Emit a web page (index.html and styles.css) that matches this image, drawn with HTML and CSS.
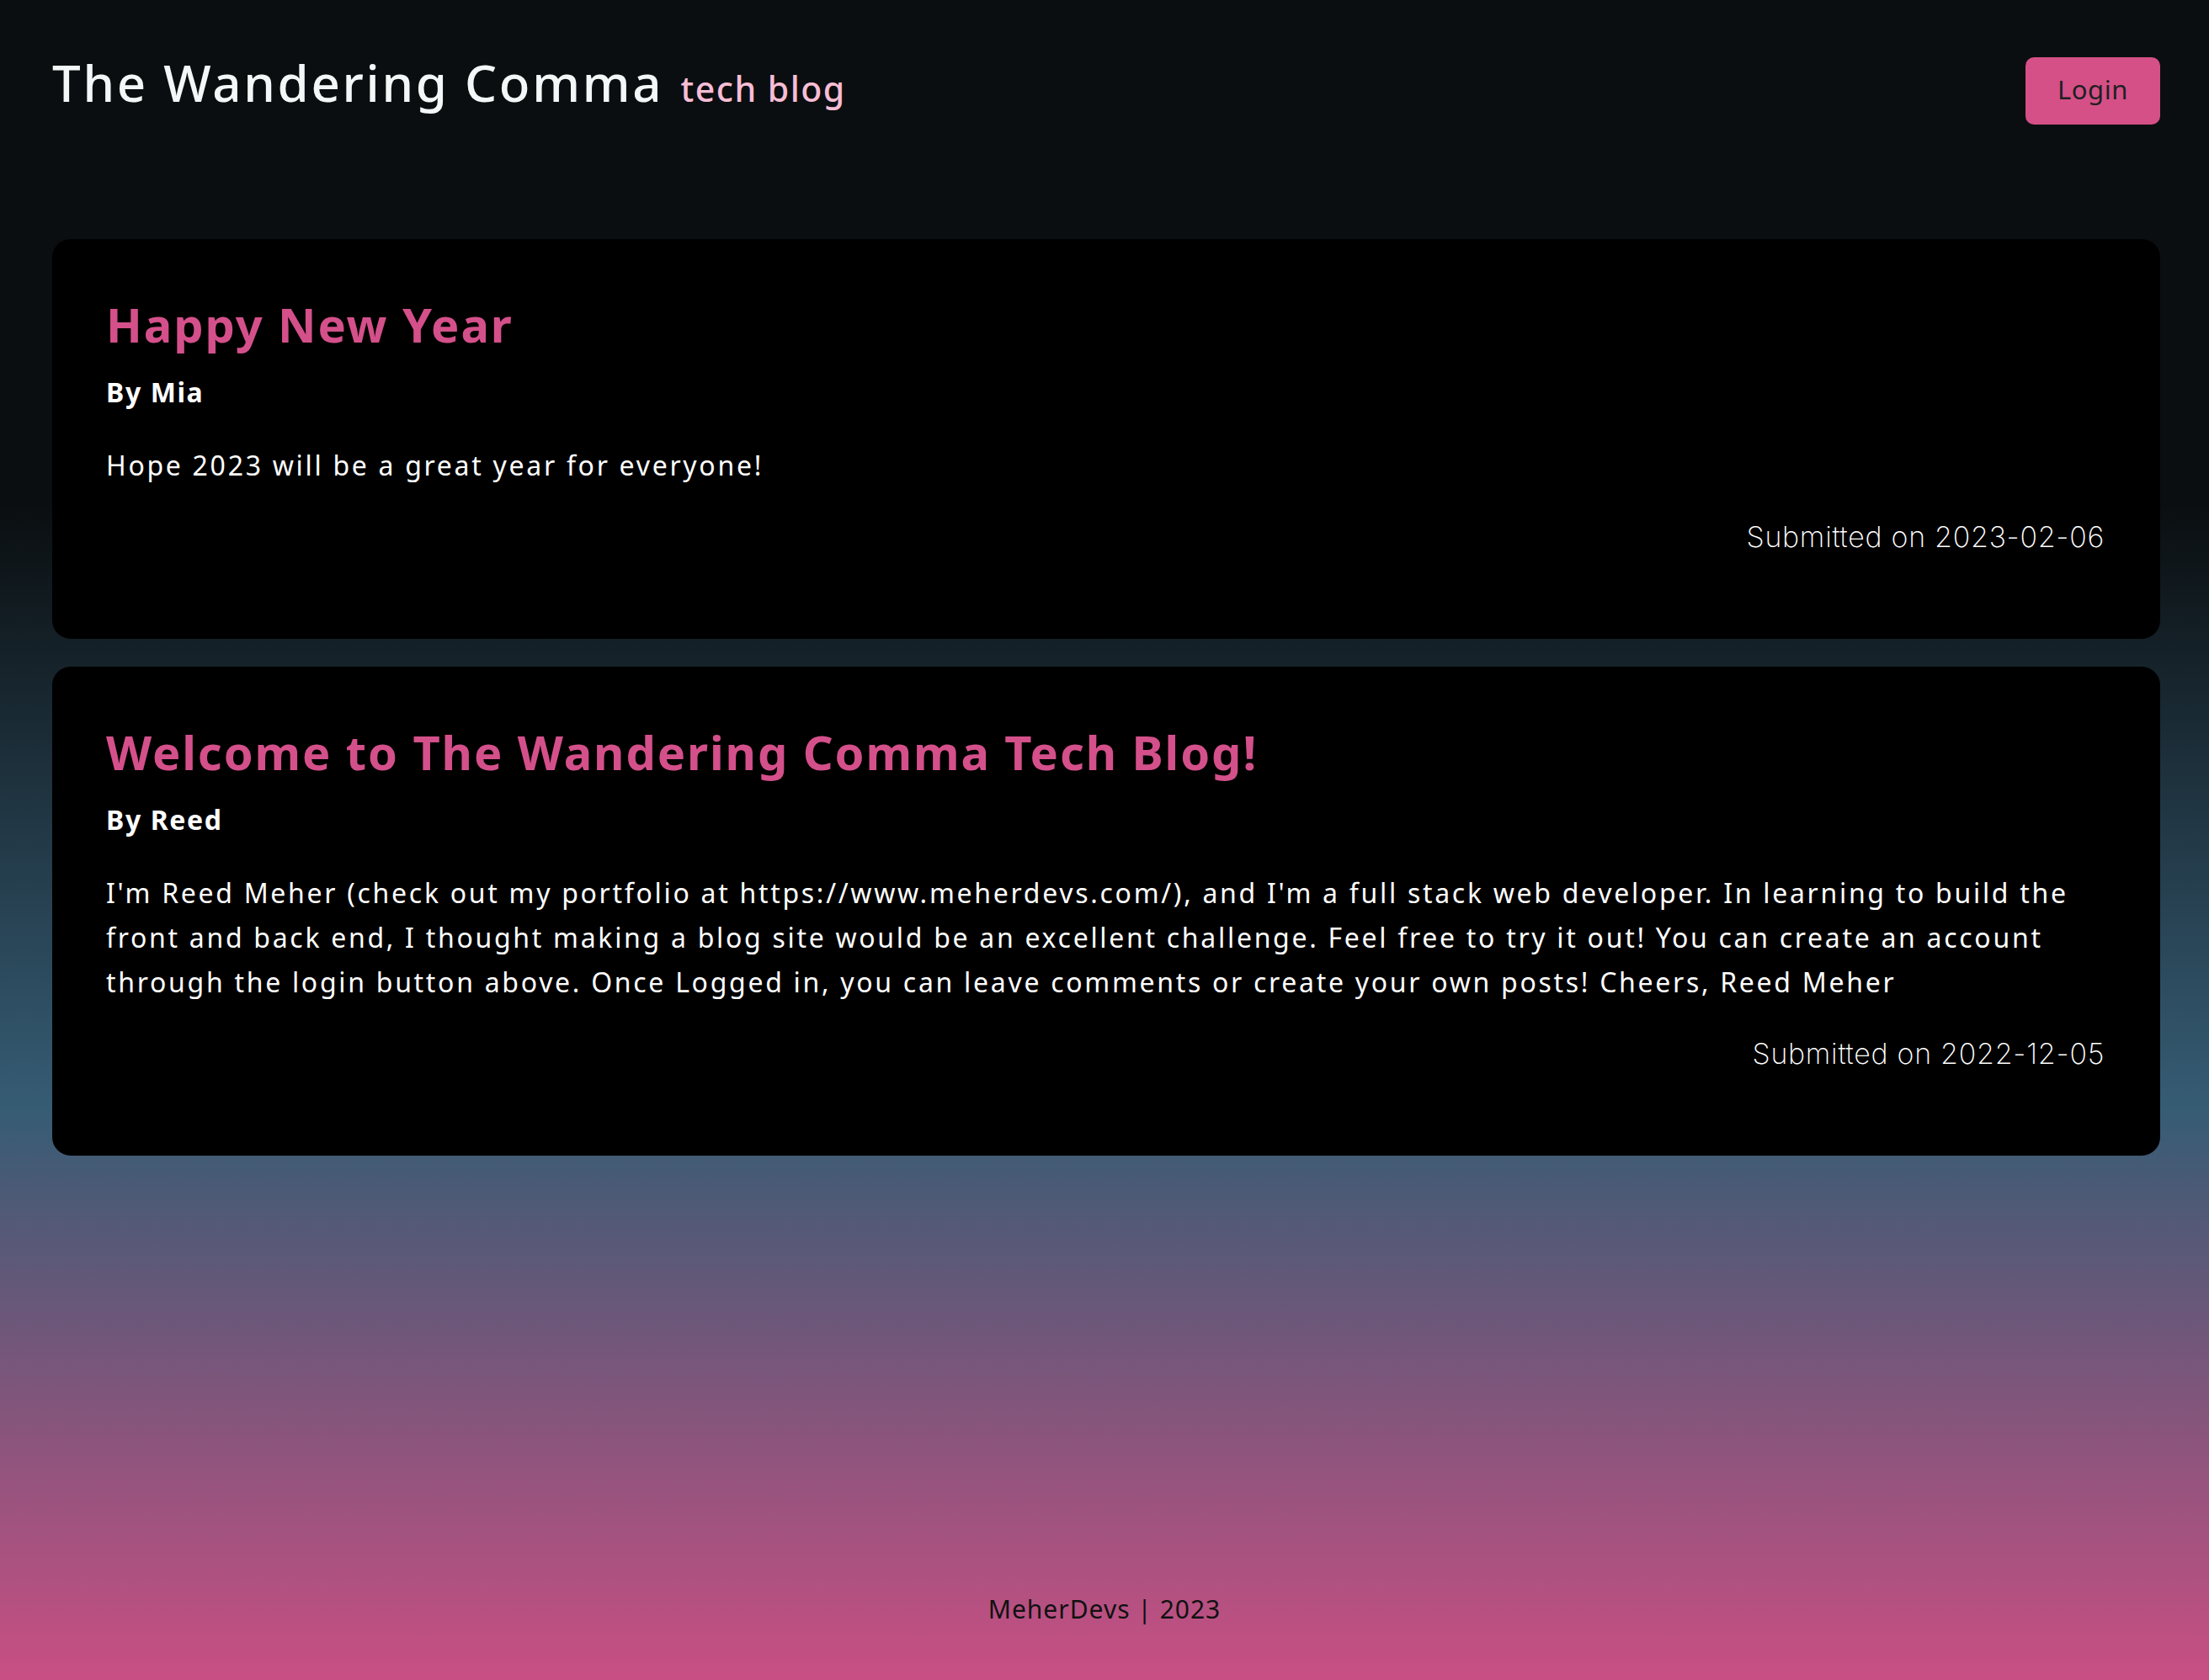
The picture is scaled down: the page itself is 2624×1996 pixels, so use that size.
FILE: index.html
```html
<!DOCTYPE html>
<html lang="en">
<head>
<meta charset="utf-8">
<title>The Wandering Comma</title>
<link rel="stylesheet" href="styles.css">
</head>
<body>
  <header class="site-header">
    <h1 class="brand">The Wandering Comma <span class="brand-sub">tech blog</span></h1>
    <button class="login-btn">Login</button>
  </header>
  <main class="posts">
    <article class="post">
      <h2 class="post-title">Happy New Year</h2>
      <p class="post-author">By Mia</p>
      <p class="post-body">Hope 2023 will be a great year for everyone!</p>
      <p class="post-date">Submitted on 2023-02-06</p>
    </article>
    <article class="post">
      <h2 class="post-title">Welcome to The Wandering Comma Tech Blog!</h2>
      <p class="post-author">By Reed</p>
      <p class="post-body">I'm Reed Meher (check out my portfolio at https://www.meherdevs.com/), and I'm a full stack web developer. In learning to build the front and back end, I thought making a blog site would be an excellent challenge. Feel free to try it out! You can create an account through the login button above. Once Logged in, you can leave comments or create your own posts! Cheers, Reed Meher</p>
      <p class="post-date">Submitted on 2022-12-05</p>
    </article>
  </main>
  <footer class="site-footer">MeherDevs | 2023</footer>
</body>
</html>
```

FILE: styles.css
```css
html, body {
  margin: 0;
  padding: 0;
}

body {
  min-height: 100vh;
  display: flex;
  flex-direction: column;
  font-family: "Noto Sans", "Open Sans", sans-serif;
  color: #ffffff;
  background: linear-gradient(180deg, #0a0e10 0%, #0a0e10 30%, #365c74 66%, #c94f83 100%);
}

.site-header {
  display: flex;
  justify-content: space-between;
  align-items: flex-start;
  padding: 68px 58px 0 62px;
}

.brand {
  margin: 0;
  font-size: 60px;
  line-height: 60px;
  font-weight: 500;
  letter-spacing: 2.7px;
  color: #f4f7f7;
}

.brand-sub {
  margin-left: 2px;
  font-size: 41px;
  letter-spacing: 1.5px;
  color: #f7bdd5;
}

.login-btn {
  width: 160px;
  height: 80px;
  border: none;
  border-radius: 10px;
  background: #d45087;
  color: #1f1f23;
  font-family: "Noto Sans", "Open Sans", sans-serif;
  font-size: 31px;
  letter-spacing: 0.6px;
  padding: 0 0 4px;
}

.posts {
  display: flex;
  flex-direction: column;
  gap: 33px;
  margin-top: 136px;
  padding: 0 58px 0 62px;
}

.post {
  background: #000;
  border-radius: 22px;
  padding: 68px 66px 97px 64px;
}

.post-title {
  margin: 0;
  font-size: 56px;
  line-height: 67px;
  font-weight: 700;
  letter-spacing: 1.9px;
  color: #d4508a;
}

.post-author {
  margin: 23px 0 0;
  font-size: 32px;
  line-height: 48px;
  font-weight: 700;
  letter-spacing: 1.6px;
}

.post-body {
  margin: 36px 0 0;
  font-size: 32px;
  line-height: 53px;
  letter-spacing: 2.7px;
}

.post-date {
  margin: 35px 0 0;
  font-family: Inter, "Noto Sans", sans-serif;
  font-size: 34px;
  line-height: 48px;
  font-weight: 250;
  letter-spacing: 0.7px;
  text-align: right;
}

.site-footer {
  margin-top: auto;
  padding-bottom: 64px;
  text-align: center;
  font-size: 30px;
  line-height: 40px;
  letter-spacing: 1px;
  color: #111;
}
```
